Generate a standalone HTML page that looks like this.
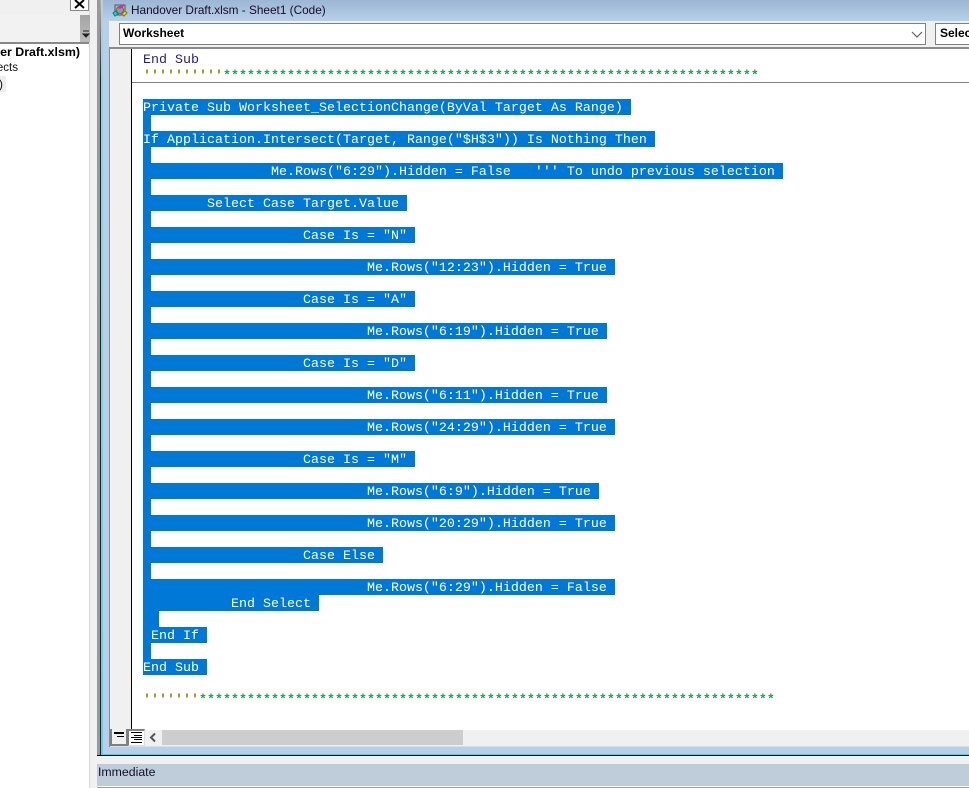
<!DOCTYPE html>
<html><head><meta charset="utf-8">
<style>
html,body{margin:0;padding:0;background:#f0f0f0}
#r{position:relative;width:969px;height:788px;overflow:hidden;background:#f0f0f0;font-family:"Liberation Sans",sans-serif}
#r div{position:absolute}
.c{left:143px;font:13.33px/20px "Liberation Mono",monospace;white-space:pre;height:16px;color:#fff}
.c span{background:#0078d7;display:inline-block;height:16px;vertical-align:top}
.cm{color:#2f9a58!important;font-weight:bold}
.cm i{font-style:normal;color:#8a8a00}
</style></head><body><div id="r">
<div style="left:0;top:0;width:89px;height:788px;background:#fff"></div>
<div style="left:89px;top:0;width:1px;height:788px;background:#d8d8d8"></div>
<div style="left:0;top:0;width:89px;height:15px;background:#f0f0f0"></div>
<div style="left:70px;top:0;width:19px;height:11px;background:#fff;border:1px solid #888;border-top:0;box-sizing:border-box"></div>
<svg style="position:absolute;left:70px;top:0" width="20" height="11"><path d="M5 0L14 8M14 0L5 8" stroke="#000" stroke-width="2" fill="none"/></svg>
<div style="left:0;top:15px;width:80px;height:27px;background:#f2f2f2"></div>
<div style="left:80px;top:15px;width:11px;height:27px;background:linear-gradient(#a4a4a4,#bcbcbc)"></div>
<svg style="position:absolute;left:81px;top:29px" width="10" height="11"><path d="M2 2H8M2 5H8L5 8Z" stroke="#222" stroke-width="1" fill="#222"/></svg>
<div style="left:0;top:42px;width:89px;height:2px;background:#888"></div>
<div style="left:90px;top:0;width:7px;height:788px;background:#f0f0f0"></div>
<div style="left:-30px;top:44px;width:110px;height:16px;font:bold 12.4px/16px 'Liberation Sans',sans-serif;white-space:nowrap;color:#000;text-align:right">er Draft.xlsm)</div>
<div style="left:-12px;top:60px;width:30px;height:16px;font:11.5px/16px 'Liberation Sans',sans-serif;color:#111;text-align:right;white-space:nowrap">ects</div>
<div style="left:0;top:76px;width:6px;height:16px;background:#eee"></div>
<div style="left:-8px;top:76px;width:11px;height:16px;font:12px/16px 'Liberation Sans',sans-serif;color:#111;text-align:right">)</div>

<div style="left:97px;top:0;width:3px;height:756px;background:#999"></div>
<div style="left:100px;top:0;width:1px;height:756px;background:linear-gradient(#b0b4b8 0,#222 80px)"></div>
<div style="left:101px;top:0;width:2px;height:755px;background:linear-gradient(#c4ccd4 0,#8fd4e8 80px,#5fd0e8 100%)"></div>
<div style="left:97px;top:755px;width:872px;height:1px;background:#000"></div>
<div style="left:101px;top:754px;width:868px;height:1px;background:#38d4ea"></div>
<div style="left:103px;top:0;width:866px;height:754px;background:#b7d0ea"></div>
<div style="left:103px;top:0;width:866px;height:21px;background:linear-gradient(#9cb6d3,#b7d0ea)"></div>
<svg style="position:absolute;left:112px;top:2px" width="17" height="16"><path d="M3 3H13V12L11 13H5L3 12Z" fill="#b8b8b8" stroke="#555"/><circle cx="8" cy="8" r="3.500" fill="#999" stroke="#666"/><path d="M6 6L10 2L12 4L8 7Z" fill="#e020c0"/><path d="M1 11L3.500 9L6 12L3 14Z" fill="#20d0e8" stroke="#087"/><path d="M10 12L13 9L15 11L12 14Z" fill="#f0e020" stroke="#870"/></svg>
<div style="left:131px;top:1px;height:18px;font:11.8px/18px 'Liberation Sans',sans-serif;color:#1a0a2a;white-space:nowrap">Handover Draft.xlsm - Sheet1 (Code)</div>
<div style="left:109px;top:21px;width:860px;height:26px;background:#f0f0f0"></div>
<div style="left:119px;top:23px;width:807px;height:22px;box-sizing:border-box;background:#fff;border:1px solid #808080;font:bold 12px/19px 'Liberation Sans',sans-serif;padding-left:3px;color:#000">Worksheet</div>
<svg style="position:absolute;left:911px;top:30px" width="14" height="9"><path d="M1 2L6 7L11 2" stroke="#606060" stroke-width="1.2" fill="none"/></svg>
<div style="left:935px;top:23px;width:60px;height:22px;box-sizing:border-box;background:#fff;border:1px solid #808080;font:bold 12px/19px 'Liberation Sans',sans-serif;padding-left:4px;color:#000">Select</div>

<div style="left:109px;top:47px;width:860px;height:700px;background:#fff"></div>
<div style="left:109px;top:47px;width:860px;height:2px;background:#8a8a8a"></div>
<div style="left:109px;top:47px;width:1px;height:700px;background:#8a8a8a"></div>
<div style="left:110px;top:49px;width:21px;height:697px;background:#f0f0f0"></div>
<div style="left:131px;top:49px;width:1px;height:681px;background:#000"></div>
<div style="left:132px;top:82px;width:837px;height:1px;background:#808080"></div>

<div class="c" style="top:51px;color:#2a1a80">End Sub</div>
<div class="c cm" style="top:67px"><i>''''''''''</i>*******************************************************************</div>
<div class="c" style="top:99px"><span>Private Sub Worksheet_SelectionChange(ByVal Target As Range) </span></div>
<div class="c" style="top:115px"><span> </span></div>
<div class="c" style="top:131px"><span>If Application.Intersect(Target, Range("$H$3")) Is Nothing Then </span></div>
<div class="c" style="top:147px"><span> </span></div>
<div class="c" style="top:163px"><span>                Me.Rows("6:29").Hidden = False   ''' To undo previous selection </span></div>
<div class="c" style="top:179px"><span> </span></div>
<div class="c" style="top:195px"><span>        Select Case Target.Value </span></div>
<div class="c" style="top:211px"><span> </span></div>
<div class="c" style="top:227px"><span>                    Case Is = "N" </span></div>
<div class="c" style="top:243px"><span> </span></div>
<div class="c" style="top:259px"><span>                            Me.Rows("12:23").Hidden = True </span></div>
<div class="c" style="top:275px"><span> </span></div>
<div class="c" style="top:291px"><span>                    Case Is = "A" </span></div>
<div class="c" style="top:307px"><span> </span></div>
<div class="c" style="top:323px"><span>                            Me.Rows("6:19").Hidden = True </span></div>
<div class="c" style="top:339px"><span> </span></div>
<div class="c" style="top:355px"><span>                    Case Is = "D" </span></div>
<div class="c" style="top:371px"><span> </span></div>
<div class="c" style="top:387px"><span>                            Me.Rows("6:11").Hidden = True </span></div>
<div class="c" style="top:403px"><span> </span></div>
<div class="c" style="top:419px"><span>                            Me.Rows("24:29").Hidden = True </span></div>
<div class="c" style="top:435px"><span> </span></div>
<div class="c" style="top:451px"><span>                    Case Is = "M" </span></div>
<div class="c" style="top:467px"><span> </span></div>
<div class="c" style="top:483px"><span>                            Me.Rows("6:9").Hidden = True </span></div>
<div class="c" style="top:499px"><span> </span></div>
<div class="c" style="top:515px"><span>                            Me.Rows("20:29").Hidden = True </span></div>
<div class="c" style="top:531px"><span> </span></div>
<div class="c" style="top:547px"><span>                    Case Else </span></div>
<div class="c" style="top:563px"><span> </span></div>
<div class="c" style="top:579px"><span>                            Me.Rows("6:29").Hidden = False </span></div>
<div class="c" style="top:595px"><span>           End Select </span></div>
<div class="c" style="top:611px"><span>  </span></div>
<div class="c" style="top:627px"><span> End If </span></div>
<div class="c" style="top:643px"><span> </span></div>
<div class="c" style="top:659px"><span>End Sub </span></div>
<div class="c cm" style="top:691px"><i>'''''''</i>************************************************************************</div>

<div style="left:110px;top:730px;width:859px;height:16px;background:#f0f0f0"></div>
<div style="left:162px;top:730px;width:301px;height:15px;background:#cdcdcd"></div>
<div style="left:110px;top:746px;width:859px;height:1px;background:#ddd"></div>
<div style="left:110px;top:729px;width:18px;height:17px;box-sizing:border-box;background:#f0f0f0;border-right:2px solid #808080;border-bottom:2px solid #808080;border-left:2px solid #808080"></div>
<div style="left:128px;top:729px;width:17px;height:17px;box-sizing:border-box;background:#fff;border-top:2px solid #808080;border-left:1px solid #808080;border-right:1px solid #ddd;border-bottom:1px solid #ddd"></div>
<svg style="position:absolute;left:110px;top:729px" width="36" height="17"><path d="M4 3.500H14M4 4.500H14M7 7.500H14M21 3.500H32M24 6.500H32M21 8.500H32M24 10.500H32M21 13.500H32" stroke="#000" stroke-width="1" fill="none"/></svg>
<svg style="position:absolute;left:148px;top:732px" width="12" height="12"><path d="M7 1.500L3 5.500L7 9.500" stroke="#555" stroke-width="2" fill="none"/></svg>

<div style="left:97px;top:764px;width:872px;height:22px;background:#bfccda;font:12.3px/17px 'Liberation Sans',sans-serif;color:#14102a;padding-left:1px;box-sizing:border-box">Immediate</div>
<div style="left:97px;top:787px;width:872px;height:1px;background:#a0a0a0"></div>
<div style="left:97px;top:786px;width:872px;height:1px;background:#fff"></div>
</div></body></html>
